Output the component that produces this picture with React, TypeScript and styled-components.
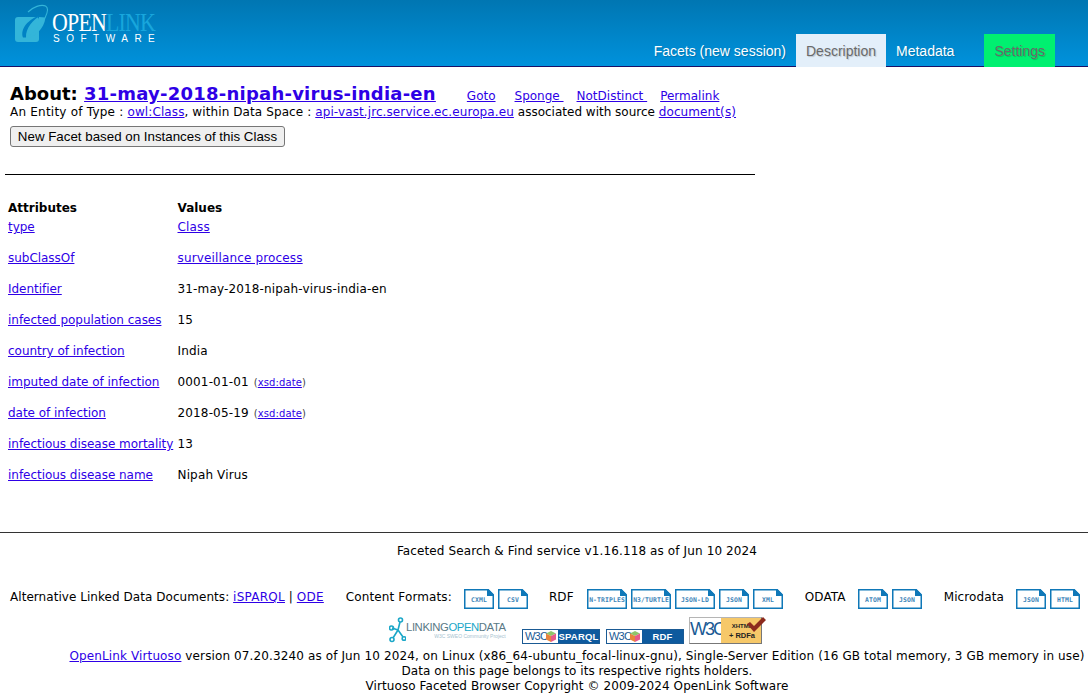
import React from "react";
import styled, { createGlobalStyle } from "styled-components";

const Global = createGlobalStyle`
  html, body { margin: 0; padding: 0; background: #fff; overflow: hidden; }
  body { font-family: "DejaVu Sans", Verdana, sans-serif; font-size: 12px; color: #000; }
  a { color: #2e00e6; text-decoration: underline; }
`;

const Page = styled.div`width: 1088px; height: 700px; overflow: hidden; display: flex; flex-direction: column;`;

const Header = styled.header`
  height: 66px; flex: none; display: flex; justify-content: space-between; align-items: flex-end;
  background: linear-gradient(#0076b2, #0092dc); border-bottom: 1px solid #1a1066;
  box-sizing: content-box; padding-right: 33px;
`;
const Logo = styled.div`align-self: flex-start; display: flex; padding: 4px 0 0 14px; color: #fff;`;
const LogoWords = styled.div`margin: 8px 0 0 1px; display: flex; flex-direction: column;`;
const LogoName = styled.div`font: 25px/21px "Liberation Serif", serif; transform: scaleX(.875); transform-origin: left; letter-spacing: -0.9px; white-space: nowrap;`;
const LogoLink = styled.span`color: #18a6dc;`;
const LogoSub = styled.div`font: 10px/11px "Liberation Sans", sans-serif; letter-spacing: 6.5px; padding-left: 1px;`;
const Tabs = styled.nav`display: flex; height: 33px; margin-bottom: -1px;`;
const Tab = styled.div<{ $kind?: "active" | "green"; $gap?: number }>`
  font: 14px/35px "Liberation Sans", sans-serif; padding: 0 10px;
  margin-left: ${(p) => p.$gap ?? 0}px;
  color: ${(p) => (p.$kind ? "#6a6a6a" : "#fff")};
  background: ${(p) => (p.$kind === "active" ? "#e3effa" : p.$kind === "green" ? "#00f070" : "transparent")};
  text-shadow: 1px 1px 1px rgba(0,0,0,.18);
`;

const Main = styled.main`height: 465px; flex: none; padding: 16px 0 0 0; box-sizing: border-box; position: relative;`;
const TitleRow = styled.div`display: flex; align-items: baseline; padding-left: 10px; height: 21px;`;
const Title = styled.h1`margin: 0; font-size: 18px; line-height: 21px; font-weight: 700;`;
const TitleLink = styled.a`letter-spacing: .23px;`;
const TopLinks = styled.div`display: flex; gap: 13px; margin-left: 31px; font-size: 12px;`;
const GotoLink = styled.a`margin-right: 6px;`;
const Sub = styled.div`padding-left: 10px; line-height: 15px; margin-top: 1px; white-space: nowrap; letter-spacing: .1px;`;
const Wider = styled.span`letter-spacing: .22px;`;
const Tighter = styled.span`letter-spacing: 0;`;
const Action = styled.button`
  display: block; margin: 6px 0 0 10px; height: 21px; width: 275px; padding: 0;
  font: 13.33px "Liberation Sans", sans-serif; color: #000; background: #efefef;
  border: 1px solid #767676; border-radius: 3px;
`;
const Rule = styled.hr`margin: 27px 0 0 5px; width: 750px; height: 1px; background: #000; border: 0;`;
const Table = styled.div`
  display: grid; grid-template-columns: 169.5px 1fr; margin: 26px 0 0 8px; grid-template-rows: 19px; grid-auto-rows: 31px;
`;
const HeadCell = styled.div`font-weight: 700; height: 15px; line-height: 15px;`;
const Cell = styled.div`line-height: 15px; white-space: nowrap; letter-spacing: -0.03px;`;
const ValueCell = styled(Cell)`letter-spacing: .15px;`;
const Small = styled.span`font-size: 10px; color: #444; letter-spacing: .1px; margin-left: 1px;`;

const Footer = styled.footer`border-top: 1px solid #333; flex: 1; min-height: 0; letter-spacing: .12px;`;
const Center = styled.div`padding-left: 66px; text-align: center; white-space: nowrap;`;
const Service = styled(Center)`padding-top: 11px; line-height: 15px; height: 41px;`;
const Formats = styled.div`display: flex; align-items: center; height: 24px; padding: 0 0 0 10px; white-space: nowrap;`;
const Label = styled.span<{ $left?: number }>`margin-left: ${(p) => p.$left ?? 0}px;`;
const AltLabel = styled(Label)`letter-spacing: .05px;`;
const AltLink = styled.a`letter-spacing: .25px;`;
const Docs = styled.span<{ $left: number }>`display: flex; gap: 4px; margin-left: ${(p) => p.$left}px; margin-top: 4px;`;
const BadgeRow = styled(Center)`display: flex; justify-content: center; align-items: flex-end; height: 28px; margin-top: 7px; padding-right: 3px; letter-spacing: 0;`;
const Lines = styled(Center)`line-height: 15px; margin-top: 5px;`;
const Line = styled.div<{ $spacing?: number }>`letter-spacing: ${(p) => p.$spacing ?? 0.12}px;`;

const LodBadge = styled.div`display: flex; align-items: center; width: 118px; height: 26px; margin-right: 15px; position: relative; top: -1px;`;
const LodWords = styled.div`font: 11.3px/11px "Liberation Sans", sans-serif; color: #5b7a86; letter-spacing: -0.4px; white-space: nowrap;`;
const LodOpen = styled.span`color: #1ba7c8;`;
const LodSub = styled.div`font: 5px/6px "Liberation Sans", sans-serif; color: #a7c3cf; text-align: right; letter-spacing: 0;`;

const W3CBox = styled.div<{ $right: number }>`
  width: 78px; height: 15px; margin-right: ${(p) => p.$right}px; display: flex; flex: none;
  border: 1px solid #1a5a94; background: #fff; box-sizing: border-box; overflow: hidden;
`;
const W3CMark = styled.span`font: 400 11px/13px "Liberation Sans", sans-serif; color: #1a5a94; padding-left: 2px; width: 21px; flex: none; letter-spacing: -.8px;`;
const Cube = styled.svg`width: 10px; height: 11px; margin: 1px 2px 0 0; flex: none;`;
const W3CName = styled.span`flex: 1; background: #0e5a9e; color: #fff; font: 700 9.5px/13px "Liberation Sans", sans-serif; text-align: center; letter-spacing: .2px;`;

const RdfaBox = styled.div`
  width: 73px; height: 27px; display: flex; position: relative; box-sizing: border-box; flex: none;
  border: 1px solid #b5b5b5; border-bottom-color: #777; border-right-color: #777; background: #fff;
`;
const RdfaW3C = styled.span`width: 31px; flex: none; font: 400 18px/23px "Liberation Sans", sans-serif; color: #1a5a94; text-align: center; letter-spacing: -2px;`;
const RdfaTag = styled.span`flex: 1; background: #f6c869; font: 700 7.5px/10px "Liberation Sans", sans-serif; padding: 3px 0 0 2px; color: #222; white-space: nowrap;`;
const TagTop = styled.span`font-size: 6px;`;
const Check = styled.svg`position: absolute; right: -5px; top: -1px; width: 20px; height: 15px;`;

const Doc: React.FC<{ t: string; w?: number }> = ({ t, w = 30 }) => (
  <svg width={w} height={20} viewBox={`0 0 ${w} 20`} style={{ flex: "none" }}>
    <path d={`M.75 .75H${w - 6}L${w - .75} 6V19.25H.75Z`} fill="#fff" stroke="#0f78b8" strokeWidth="1.5" />
    <path d={`M${w - 7} 0H${w - 5.5}L${w} 5.5V7H${w - 7}Z`} fill="#0f78b8" />
    <text x={w / 2} y="12.8" textAnchor="middle" fontFamily="DejaVu Sans Mono" fontWeight="700" fontSize="6.4" fill="#3d85b8">{t}</text>
  </svg>
);

const rows: [string, React.ReactNode][] = [
  ["type", <a href="#">Class</a>],
  ["subClassOf", <a href="#">surveillance process</a>],
  ["Identifier", "31-may-2018-nipah-virus-india-en"],
  ["infected population cases", "15"],
  ["country of infection", "India"],
  ["imputed date of infection", <>0001-01-01 <Small>(<a href="#">xsd:date</a>)</Small></>],
  ["date of infection", <>2018-05-19 <Small>(<a href="#">xsd:date</a>)</Small></>],
  ["infectious disease mortality", "13"],
  ["infectious disease name", "Nipah Virus"],
];

const CubeIcon = () => (
  <Cube viewBox="0 0 10 11">
    <path d="M5 0L10 2.5L5 5L0 2.5Z" fill="#8fc56a" />
    <path d="M0 2.5L5 5V11L0 8.5Z" fill="#e8843c" />
    <path d="M10 2.5L5 5V11L10 8.5Z" fill="#e85a8a" />
  </Cube>
);

export default function App() {
  return (
    <Page>
      <Global />
      <Header>
        <Logo>
          <svg width="37" height="40" viewBox="0 0 37 40">
            <rect x="1" y="13" width="24" height="25" rx="3" fill="#33b5d9" />
            <path d="M9 33.5C6 25 14 15 27 11C19 16 11.5 24 12 33.5Z" fill="#0082c4" />
            <path d="M12.5 34C21 33 30 25 31.5 13.5L25 13V20C22 26 17 32 12.5 34Z" fill="#33b5d9" />
            <path d="M14 8C19 3 27 0 31.5 2C35 4 33 10 31 14" fill="none" stroke="#33b5d9" strokeWidth="1.1" />
          </svg>
          <LogoWords>
            <LogoName>OPEN<LogoLink>LINK</LogoLink></LogoName>
            <LogoSub>SOFTWARE</LogoSub>
          </LogoWords>
        </Logo>
        <Tabs>
          <Tab>Facets (new session)</Tab>
          <Tab $kind="active">Description</Tab>
          <Tab>Metadata</Tab>
          <Tab $kind="green" $gap={20}>Settings</Tab>
        </Tabs>
      </Header>
      <Main>
        <TitleRow>
          <Title>About: <TitleLink href="#">31-may-2018-nipah-virus-india-en</TitleLink></Title>
          <TopLinks>
            <GotoLink href="#">Goto</GotoLink>
            <a href="#">Sponge&nbsp;</a>
            <a href="#">NotDistinct&nbsp;</a>
            <a href="#">Permalink</a>
          </TopLinks>
        </TitleRow>
        <Sub><Wider>An Entity of Type : </Wider><a href="#">owl:Class</a>, within Data Space : <a href="#">api-vast.jrc.service.ec.europa.eu</a> <Tighter>associated with source </Tighter><a href="#">document(s)</a></Sub>
        <Action>New Facet based on Instances of this Class</Action>
        <Rule />
        <Table>
          <HeadCell>Attributes</HeadCell><HeadCell>Values</HeadCell>
          {rows.map(([k, v]) => (
            <React.Fragment key={k}>
              <Cell><a href="#">{k}</a></Cell>
              <ValueCell>{v}</ValueCell>
            </React.Fragment>
          ))}
        </Table>
      </Main>
      <Footer>
        <Service>Faceted Search &amp; Find service v1.16.118 as of Jun 10 2024</Service>
        <Formats>
          <AltLabel>Alternative Linked Data Documents: <AltLink href="#">iSPARQL</AltLink> | <AltLink href="#">ODE</AltLink></AltLabel>
          <Label $left={22}>Content Formats:</Label>
          <Docs $left={12}><Doc t="CXML" /><Doc t="CSV" /></Docs>
          <Label $left={21}>RDF</Label>
          <Docs $left={13}><Doc t="N-TRIPLES" w={40} /><Doc t="N3/TURTLE" w={40} /><Doc t="JSON-LD" w={40} /><Doc t="JSON" /><Doc t="XML" /></Docs>
          <Label $left={22}>ODATA</Label>
          <Docs $left={12}><Doc t="ATOM" /><Doc t="JSON" /></Docs>
          <Label $left={22}>Microdata</Label>
          <Docs $left={12}><Doc t="JSON" /><Doc t="HTML" /></Docs>
        </Formats>
        <BadgeRow>
          <LodBadge>
            <svg width="17" height="26" viewBox="0 0 17 26" style={{ flex: "none" }}>
              <g fill="none" stroke="#1ba7c8" strokeWidth="1.6">
                <path d="M4 21L9 13M9 13L11 5M9 13L3 11M9 13L14 20" />
                <circle cx="11.5" cy="3" r="2" /><circle cx="2.5" cy="11" r="2" /><circle cx="3" cy="22.5" r="2" /><circle cx="15" cy="21.5" r="1.8" />
              </g>
            </svg>
            <div>
              <LodWords>LINKING<LodOpen>OPEN</LodOpen>DATA</LodWords>
              <LodSub>W3C SWEO Community Project</LodSub>
            </div>
          </LodBadge>
          <W3CBox $right={6}><W3CMark>W3C</W3CMark><CubeIcon /><W3CName>SPARQL</W3CName></W3CBox>
          <W3CBox $right={5}><W3CMark>W3C</W3CMark><CubeIcon /><W3CName>RDF</W3CName></W3CBox>
          <RdfaBox>
            <RdfaW3C>W3C</RdfaW3C>
            <RdfaTag><TagTop>XHTML</TagTop><br />+ RDFa</RdfaTag>
            <Check viewBox="0 0 20 15"><path d="M1 7L4 5L8 9L17 0L20 3L8 15Z" fill="#8c2a1e" /></Check>
          </RdfaBox>
        </BadgeRow>
        <Lines>
          <Line><a href="#">OpenLink Virtuoso</a> version 07.20.3240 as of Jun 10 2024, on Linux (x86_64-ubuntu_focal-linux-gnu), Single-Server Edition (16 GB total memory, 3 GB memory in use)</Line>
          <Line $spacing={0.04}>Data on this page belongs to its respective rights holders.</Line>
          <Line $spacing={0.09}>Virtuoso Faceted Browser Copyright © 2009-2024 OpenLink Software</Line>
        </Lines>
      </Footer>
    </Page>
  );
}
